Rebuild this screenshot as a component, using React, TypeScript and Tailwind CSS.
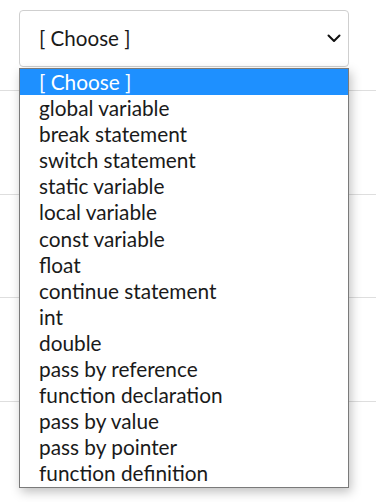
import React from "react";

const options = [
  "[ Choose ]",
  "global variable",
  "break statement",
  "switch statement",
  "static variable",
  "local variable",
  "const variable",
  "float",
  "continue statement",
  "int",
  "double",
  "pass by reference",
  "function declaration",
  "pass by value",
  "pass by pointer",
  "function definition",
];

export default function App() {
  return (
    <div
      className="relative w-[376px] h-[502px] overflow-hidden bg-white text-[#1a1a1a]"
      style={{ fontFamily: "Lato, 'Open Sans', sans-serif" }}
    >
      <div className="flex flex-col">
        <div className="h-[91px] border-b border-[#dedede] pt-[10px] pl-[19px]">
          <div className="flex h-[57px] w-[330px] items-center justify-between rounded-[4px] border border-[#cfcfcf] pl-[19px] pr-[7px] text-[20.6px]">
            <span>[ Choose ]</span>
            <svg width="14" height="9" viewBox="0 0 14 9" fill="none">
              <path d="M1.5 1.5 L7 7 L12.5 1.5" stroke="#111" strokeWidth="2" strokeLinecap="round" strokeLinejoin="round" />
            </svg>
          </div>
        </div>
        <div className="h-[103.5px] border-b border-[#dedede]" />
        <div className="h-[103.5px] border-b border-[#dedede]" />
        <div className="h-[103.5px] border-b border-[#dedede]" />
      </div>

      <div className="absolute left-[19px] top-[68px] w-[330px] border border-[#7a7a7a] bg-white shadow-[2px_4px_10px_rgba(0,0,0,0.25)]">
        {options.map((o, i) => (
          <div
            key={o}
            className={
              "h-[26.1px] pl-[19px] text-[20.8px] leading-[26px] whitespace-nowrap " +
              (i === 0 ? "bg-[#1e90ff] text-white" : "")
            }
          >
            {o}
          </div>
        ))}
      </div>
    </div>
  );
}
